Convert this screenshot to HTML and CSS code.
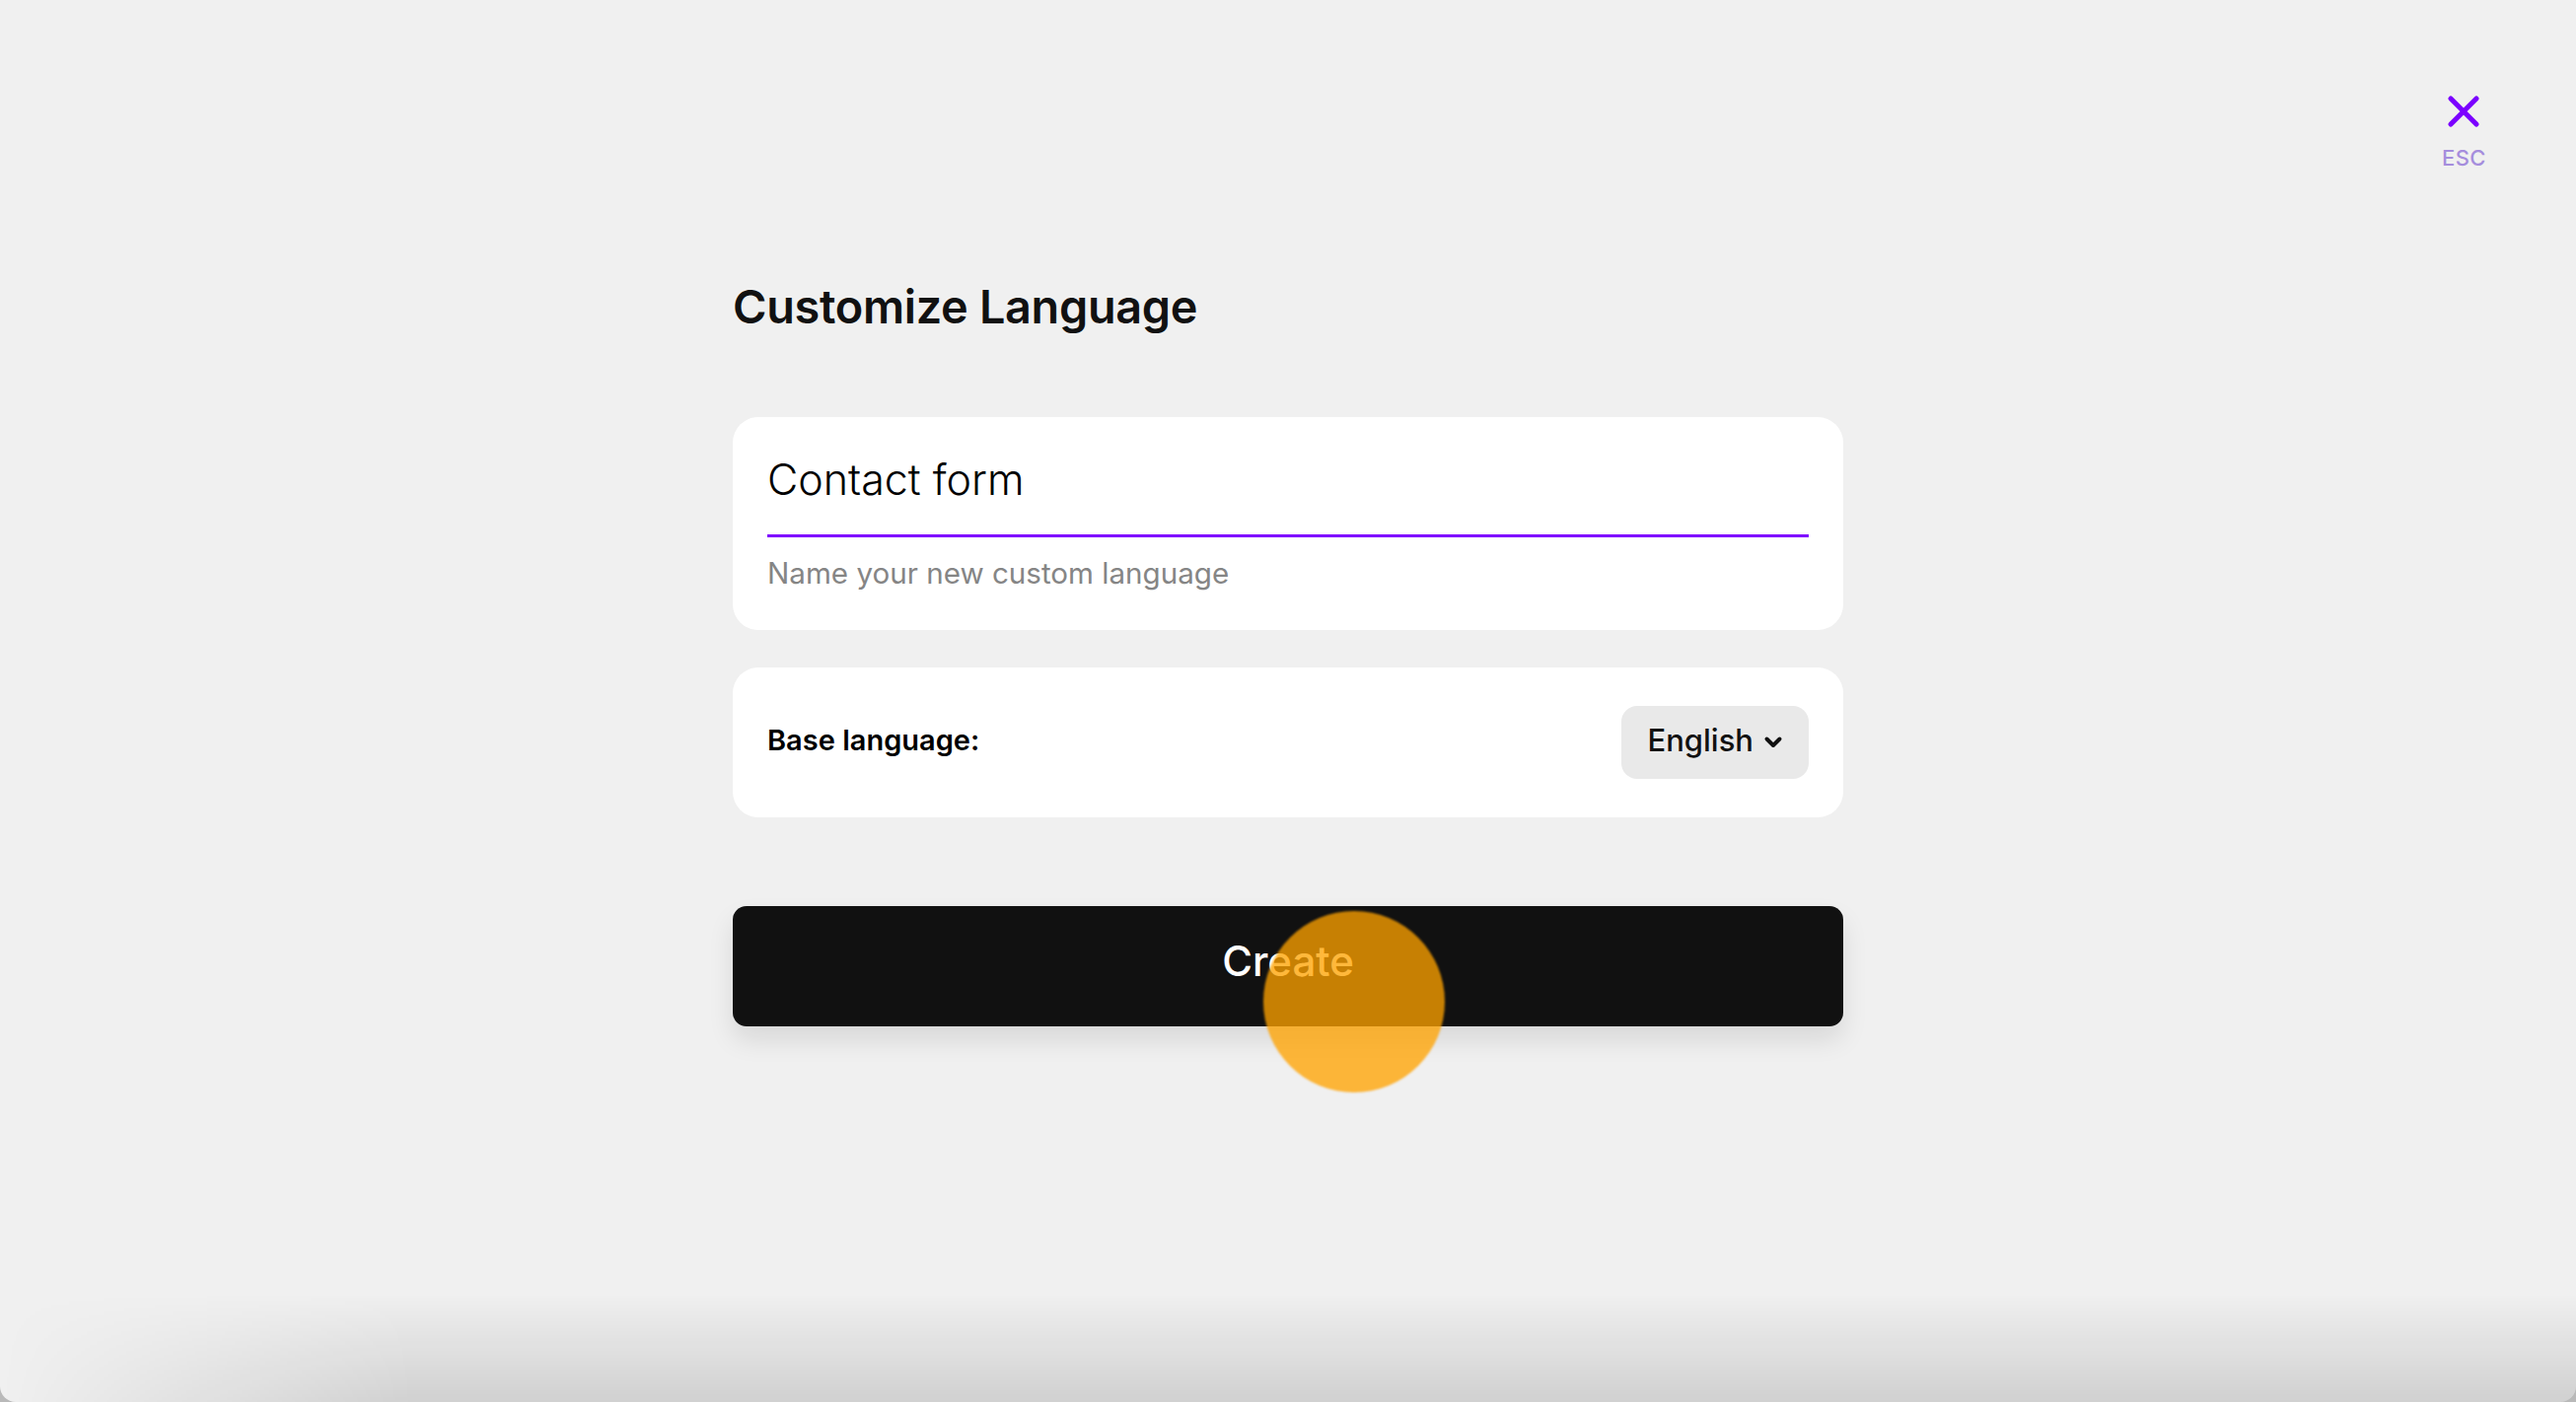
FILE: index.html
```html
<!DOCTYPE html>
<html lang="en">
<head>
  <meta charset="UTF-8">
  <title>Customize Language</title>
  <link rel="stylesheet" href="styles.css">
</head>
<body>
  <div class="window">

    <button class="close-btn" type="button">
      <svg class="close-icon" viewBox="0 0 36 36" width="36" height="36">
        <path d="M5 5 L31 31 M31 5 L5 31" stroke="#7b00ff" stroke-width="5.2" stroke-linecap="round" fill="none"/>
      </svg>
      <span class="close-label">ESC</span>
    </button>

    <div class="panel">
      <h1 class="panel-title">Customize Language</h1>

      <div class="card name-card">
        <div class="name-input">Contact form</div>
        <div class="name-line"></div>
        <div class="name-hint">Name your new custom language</div>
      </div>

      <div class="card base-card">
        <span class="base-label">Base language:</span>
        <button class="lang-pill" type="button">
          English
          <svg class="chevron" viewBox="0 0 20 14" width="20" height="14">
            <path d="M3.5 3.5 L10 10 L16.5 3.5" stroke="#111" stroke-width="4" stroke-linecap="round" stroke-linejoin="round" fill="none"/>
          </svg>
        </button>
      </div>

      <button class="create-btn" type="button">Create</button>
    </div>

    <div class="click-dot"></div>
    <div class="bottom-shade"></div>
  </div>
</body>
</html>
```

FILE: styles.css
```css
body {
  margin: 0;
  padding: 0;
  background: #b9b9b9;
  font-family: 'Inter', 'Noto Sans', sans-serif;
  color: #111;
}

.window {
  position: relative;
  height: 1422px;
  background: #f0f0f0;
  border-radius: 0 0 16px 16px;
  overflow: hidden;
}

.close-btn {
  position: absolute;
  top: 95px;
  right: 91px;
  display: flex;
  flex-direction: column;
  align-items: center;
  gap: 16px;
  background: none;
  border: none;
  padding: 0;
  cursor: pointer;
}

.close-icon {
  display: block;
}

.close-label {
  font-family: 'Inter', sans-serif;
  font-size: 22px;
  font-weight: 500;
  letter-spacing: 0.5px;
  color: #a58ddd;
}

.panel {
  width: 1126px;
  margin: 0 auto;
  padding-top: 281px;
  display: flex;
  flex-direction: column;
}

.panel-title {
  margin: 0 0 82px;
  font-size: 46.8px;
  line-height: 60px;
  font-weight: 600;
  letter-spacing: -0.3px;
  color: #111;
}

.card {
  background: #fff;
  border-radius: 26px;
  padding: 0 35px;
}

.name-card {
  padding-top: 33px;
  padding-bottom: 38px;
  margin-bottom: 38px;
}

.name-input {
  font-size: 43px;
  line-height: 60px;
  font-weight: 300;
  color: #000;
  padding-bottom: 26px;
}

.name-line {
  height: 3px;
  background: #7f00ff;
}

.name-hint {
  margin-top: 16px;
  font-size: 29.6px;
  line-height: 40px;
  color: #858585;
}

.base-card {
  height: 152px;
  display: flex;
  align-items: center;
  justify-content: space-between;
  margin-bottom: 90px;
}

.base-label {
  font-size: 29px;
  font-weight: 600;
  color: #000;
  padding-bottom: 6px;
}

.lang-pill {
  height: 74px;
  padding: 0 26px 5px 26px;
  display: flex;
  align-items: center;
  gap: 10px;
  background: #e9e9e9;
  border: none;
  border-radius: 16px;
  font-family: 'Inter', sans-serif;
  font-size: 31px;
  font-weight: 500;
  color: #111;
  cursor: pointer;
}

.chevron {
  display: block;
  margin-top: 4px;
}

.create-btn {
  height: 122px;
  background: #111;
  color: #fff;
  border: none;
  border-radius: 14px;
  font-family: 'Inter', sans-serif;
  font-size: 42px;
  font-weight: 500;
  padding-bottom: 12px;
  box-shadow: 0 14px 26px rgba(0, 0, 0, 0.1);
  cursor: pointer;
}

.click-dot {
  position: absolute;
  left: 1281px;
  top: 924px;
  width: 184px;
  height: 184px;
  border-radius: 50%;
  background: rgba(255, 162, 0, 0.77);
  filter: blur(1px);
}

.bottom-shade {
  position: absolute;
  left: 0;
  right: 0;
  bottom: 0;
  height: 110px;
  background: linear-gradient(to bottom, rgba(0, 0, 0, 0), rgba(0, 0, 0, 0.13));
  -webkit-mask-image: linear-gradient(to right, transparent 0, #000 420px);
  mask-image: linear-gradient(to right, transparent 0, #000 420px);
  pointer-events: none;
}
```
